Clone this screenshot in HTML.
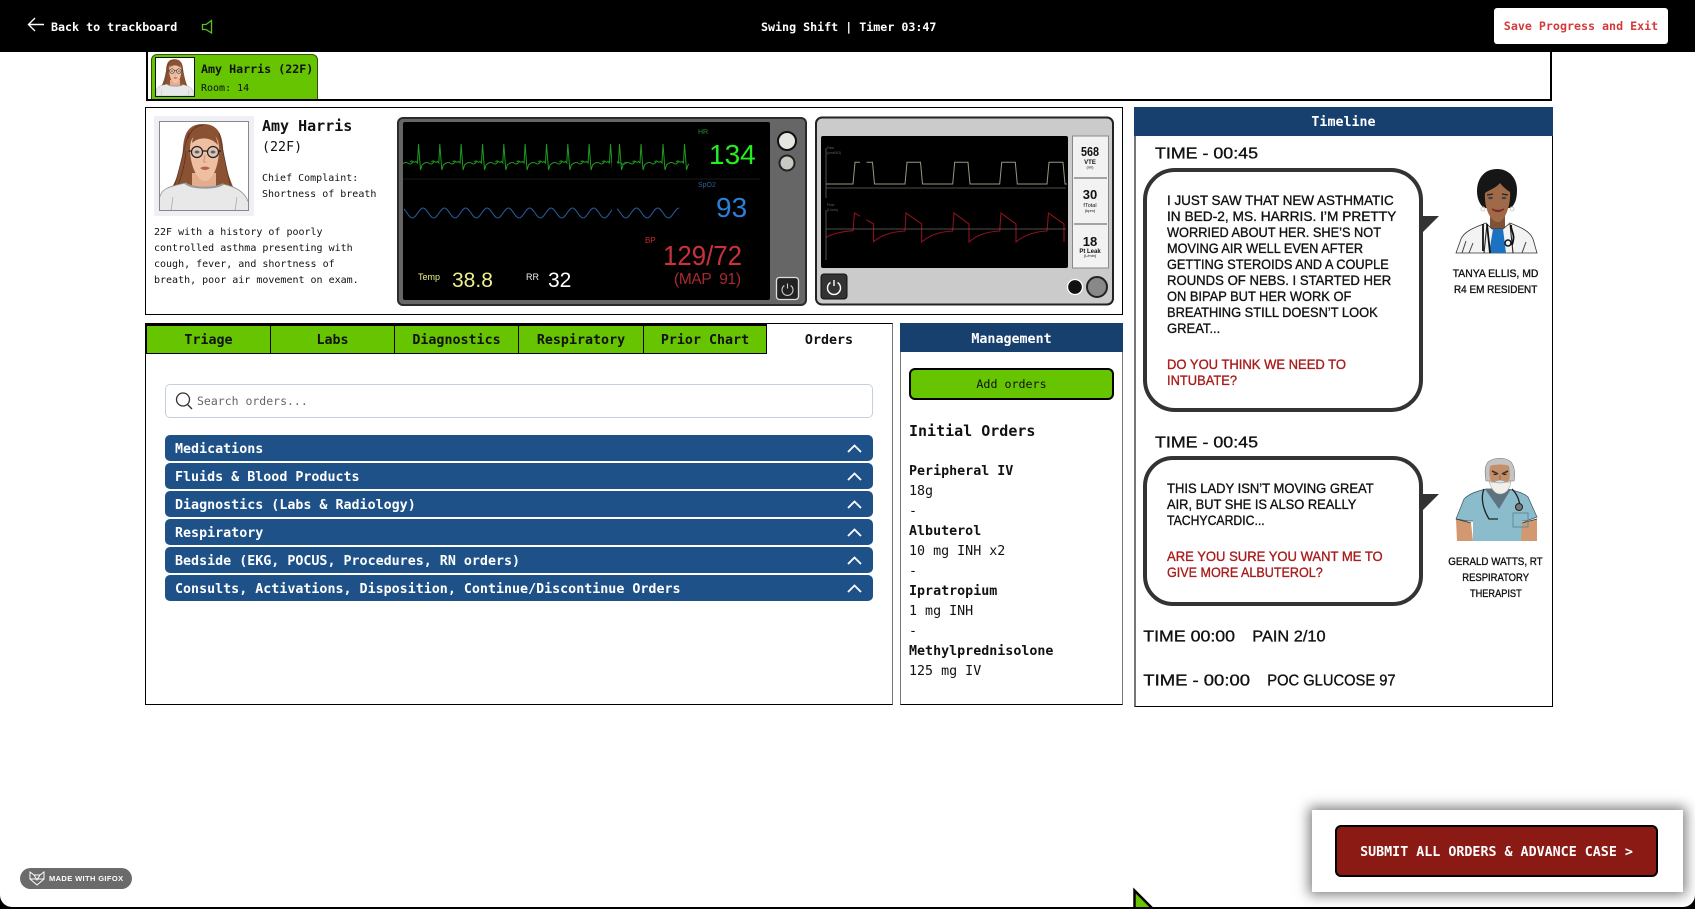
<!DOCTYPE html>
<html lang="en"><head><meta charset="utf-8"><title>Swing Shift</title>
<style>
html,body{margin:0;padding:0;width:1695px;height:909px;overflow:hidden;background:#000}
*{box-sizing:border-box}
#page{position:absolute;left:0;top:0;width:1695px;height:907px;background:#fff;border-radius:0 0 12px 12px;overflow:hidden;font-family:"DejaVu Sans Mono","Liberation Mono",monospace;color:#111}
.a{position:absolute;white-space:pre}
.b{font-weight:bold}
.tab{position:absolute;top:324px;height:30px;background:#66c400;border:1px solid #000;border-top-width:2px;text-align:center;font-weight:bold;font-size:13.33px;line-height:29px;color:#111}
.row{position:absolute;left:165px;width:708px;height:26px;background:#1f5189;border-radius:5px;color:#fff;font-weight:bold;font-size:13.33px;line-height:29px;padding-left:10px;white-space:pre}
.row svg{position:absolute;left:682px;top:9px}
.o{position:absolute;left:909px;font-size:13.33px;line-height:20px;white-space:pre}
svg{display:block}
.c{font-family:"Liberation Sans",sans-serif;fill:#111;stroke:#111;stroke-width:.35;font-size:14px}
.r{fill:#a81c1c;stroke:#a81c1c}
.n{font-size:11px}
.h{font-size:16px}
.m{font-family:"Liberation Sans",sans-serif}
</style></head><body>
<div id="page">

<div class="a" style="left:146px;top:50px;width:1406px;height:51px;border:2px solid #000;border-top:0;border-bottom-width:2px"></div>
<div class="a" style="left:151px;top:54px;width:167px;height:45px;background:#66c400;border:1px solid #2c5400;border-bottom:0;border-radius:6px 6px 0 0"></div>
<div class="a" style="left:155px;top:57px;width:40px;height:40px;background:#fff;border:1px solid #111;overflow:hidden"><svg width="38" height="38" viewBox="0 0 90 90"><use href="#amy"/></svg></div>
<div class="a b" style="left:201px;top:59px;font-size:11.67px;line-height:20px">Amy Harris (22F)</div>
<div class="a" style="left:201px;top:79px;font-size:10px;line-height:20px">Room: 14</div>

<div class="a" style="left:0;top:0;width:1695px;height:52px;background:#000"></div>
<svg class="a" style="left:26px;top:15px" width="20" height="20" viewBox="0 0 20 20" fill="none" stroke="#fff" stroke-width="1.4"><path d="M2.5 9.5H18M9 3 2.5 9.5 9 16"/></svg>
<div class="a b" style="left:51px;top:17px;font-size:11.67px;line-height:20px;color:#fff">Back to trackboard</div>
<svg class="a" style="left:200px;top:19px" width="14" height="16" viewBox="0 0 14 16" fill="none" stroke="#5fc020" stroke-width="1.3"><path d="M2.5 5.5H6L11.5 1.5V14L6 10.5H2.5Z"/></svg>
<div class="a b" style="left:761px;top:17px;font-size:11.67px;line-height:20px;color:#fff">Swing Shift | Timer 03:47</div>
<div class="a b" style="left:1494px;top:8px;width:174px;height:36px;background:#fff;border-radius:3px;text-align:center;line-height:37px;font-size:11.67px;color:#d33b3b">Save Progress and Exit</div>

<div class="a" style="left:145px;top:107px;width:978px;height:208px;border:1px solid #000"></div>
<div class="a" style="left:154px;top:116px;width:100px;height:100px;background:#eef0f5"></div>
<div class="a" style="left:159px;top:121px;width:90px;height:90px;background:#fff;border:1px solid #888;overflow:hidden"><svg style="margin:-1px" width="90" height="90" viewBox="0 0 90 90"><use href="#amy"/></svg></div>
<div class="a b" style="left:262px;top:115px;font-size:15px;line-height:22px">Amy Harris</div>
<div class="a" style="left:262px;top:137px;font-size:13.33px;line-height:22px">(22F)</div>
<div class="a" style="left:262px;top:171px;font-size:10px;line-height:16px">Chief Complaint:
Shortness of breath</div>
<div class="a" style="left:154px;top:225px;font-size:10px;line-height:16px">22F with a history of poorly
controlled asthma presenting with
cough, fever, and shortness of
breath, poor air movement on exam.</div>

<div class="a" style="left:145px;top:323px;width:748px;height:382px;border:1px solid #000;border-right:1px solid #777"></div>
<div class="tab" style="left:146px;width:125px">Triage</div>
<div class="tab" style="left:270px;width:125px">Labs</div>
<div class="tab" style="left:394px;width:125px">Diagnostics</div>
<div class="tab" style="left:518px;width:126px">Respiratory</div>
<div class="tab" style="left:643px;width:124px">Prior Chart</div>
<div class="a b" style="left:767px;top:325px;width:124px;text-align:center;font-size:13.33px;line-height:32px">Orders</div>

<div class="a" style="left:165px;top:384px;width:708px;height:34px;border:1px solid #c5d0de;border-radius:5px;background:#fff"></div>
<svg class="a" style="left:174px;top:391px" width="20" height="20" viewBox="0 0 20 20" fill="none" stroke="#333" stroke-width="1.3"><circle cx="9" cy="8.5" r="6.5"/><path d="M13.5 13.5 18 18"/></svg>
<div class="a" style="left:197px;top:391px;font-size:11.5px;line-height:20px;color:#666">Search orders...</div>

<div class="row" style="top:435px">Medications<svg width="15" height="9" fill="none" stroke="#fff" stroke-width="1.8"><path d="M1 8 7.5 1.5 14 8"/></svg></div>
<div class="row" style="top:463px">Fluids &amp; Blood Products<svg width="15" height="9" fill="none" stroke="#fff" stroke-width="1.8"><path d="M1 8 7.5 1.5 14 8"/></svg></div>
<div class="row" style="top:491px">Diagnostics (Labs &amp; Radiology)<svg width="15" height="9" fill="none" stroke="#fff" stroke-width="1.8"><path d="M1 8 7.5 1.5 14 8"/></svg></div>
<div class="row" style="top:519px">Respiratory<svg width="15" height="9" fill="none" stroke="#fff" stroke-width="1.8"><path d="M1 8 7.5 1.5 14 8"/></svg></div>
<div class="row" style="top:547px">Bedside (EKG, POCUS, Procedures, RN orders)<svg width="15" height="9" fill="none" stroke="#fff" stroke-width="1.8"><path d="M1 8 7.5 1.5 14 8"/></svg></div>
<div class="row" style="top:575px">Consults, Activations, Disposition, Continue/Discontinue Orders<svg width="15" height="9" fill="none" stroke="#fff" stroke-width="1.8"><path d="M1 8 7.5 1.5 14 8"/></svg></div>

<div class="a" style="left:900px;top:323px;width:223px;height:382px;border:1px solid #777;border-bottom:1px solid #000"></div>
<div class="a b" style="left:900px;top:323px;width:223px;height:29px;background:#17406f;color:#fff;text-align:center;font-size:13.33px;line-height:33px">Management</div>
<div class="a" style="left:909px;top:368px;width:205px;height:32px;background:#66c400;border:2px solid #000;border-radius:6px;text-align:center;line-height:28px;font-size:11.67px">Add orders</div>
<div class="a b" style="left:909px;top:420px;font-size:15px;line-height:22px">Initial Orders</div>
<div class="o" style="top:462px"><b>Peripheral IV</b>
18g
-
<b>Albuterol</b>
10 mg INH x2
-
<b>Ipratropium</b>
1 mg INH
-
<b>Methylprednisolone</b>
125 mg IV</div>

<div class="a" style="left:1134px;top:107px;width:419px;height:600px;border:1px solid #000;border-left:2px solid #777"></div>
<div class="a b" style="left:1134px;top:107px;width:419px;height:29px;background:#17406f;color:#fff;text-align:center;font-size:13.33px;line-height:32px">Timeline</div>

<svg class="a" style="left:0;top:0" width="1695" height="907" viewBox="0 0 1695 907">
<defs>
<symbol id="amy" viewBox="0 0 90 90" overflow="visible">
<path d="M44 3C29 3 25 13 24 27C23 44 19 56 12 68L24 72H68L75 68C69 54 65 42 64 27C63 12 58 3 44 3Z" fill="#8a5232"/>
<path d="M30 12C24 28 22 46 15 66M60 12C64 28 67 48 72 66M44 4C36 5 31 10 29 18M27 30C26 44 23 54 19 64" fill="none" stroke="#5d3420" stroke-width=".9"/>
<path d="M33 52H57V70H33Z" fill="#e3ad8e"/>
<path d="M31 28C31 15 37 12 46 12C56 12 60 17 60 28C60 44 54 60 46 60C38 60 31 44 31 28Z" fill="#efbfa2"/>
<path d="M33 22C38 17 50 14 59 24C57 12 52 8 46 8C38 8 34 13 33 22Z" fill="#8a5232"/>
<circle cx="38" cy="31" r="5.500" fill="#e3c4b2" stroke="#222" stroke-width="1.200"/><circle cx="54" cy="31" r="5.500" fill="#e3c4b2" stroke="#222" stroke-width="1.200"/>
<path d="M43.500 30H48.500M32.500 30H29.500M59.500 30H62" stroke="#222" stroke-width="1.200"/>
<ellipse cx="38" cy="31" rx="2.500" ry="1.500" fill="#58636b"/><ellipse cx="54" cy="31" rx="2.500" ry="1.500" fill="#58636b"/>
<path d="M46 34 44.500 41H47.500" fill="none" stroke="#c68a70" stroke-width=".8"/>
<path d="M41 47Q46 44 51 47Q46 51 41 47Z" fill="#b6604e"/>
<path d="M0 90V80C1 68 8 66 26 62C33 68 56 68 64 63C78 66 88 72 90 84V90Z" fill="#e8e8e8" stroke="#888" stroke-width=".7"/>
<path d="M26 62C33 68 56 68 64 63" fill="none" stroke="#999" stroke-width="2"/>
<path d="M12 90 14 76M76 90 78 76" stroke="#aaa" stroke-width=".8"/>
</symbol>
<symbol id="bt" overflow="visible" viewBox="0 0 24 30" width="24" height="30">
<path d="M0 19C1 18 2 17.500 3 18.500S5 19.500 6 18.500L7.500 20 8.500 1 10.500 27 12 22C13 21 15 19.500 17 19.500S19 21 21 21 22 20 24 19" fill="none" stroke="#1f9a1f" stroke-width="1"/>
</symbol>
<clipPath id="c1"><path d="M403 130H612V175H403ZM617 130H689V175H617Z"/></clipPath>
<clipPath id="c2"><path d="M404 200H612V225H404ZM617 200H688V225H617Z"/></clipPath>
</defs>

<!-- monitor 1 -->
<rect x="398" y="118" width="408" height="187" rx="5" fill="#666" stroke="#2b2b2b" stroke-width="2"/>
<rect x="403" y="122" width="367" height="178" rx="2" fill="#000"/>
<path d="M403 179H760" stroke="#181818"/>
<g clip-path="url(#c1)">
<use href="#bt" x="410" y="143"/><use href="#bt" x="431.300" y="143"/><use href="#bt" x="452.600" y="143"/><use href="#bt" x="474" y="143"/><use href="#bt" x="495.300" y="143"/><use href="#bt" x="516.600" y="143"/><use href="#bt" x="538" y="143"/><use href="#bt" x="559.300" y="143"/><use href="#bt" x="580.600" y="143"/><use href="#bt" x="602" y="143"/><use href="#bt" x="611" y="143"/><use href="#bt" x="632.500" y="143"/><use href="#bt" x="654.500" y="143"/><use href="#bt" x="676" y="143"/><use href="#bt" x="389" y="143"/>
</g>
<path clip-path="url(#c2)" d="M401.700 208c4 0 6.670 10 10.670 10 s6.670 -10 10.670 -10 s6.670 10 10.670 10 s6.670 -10 10.670 -10 s6.670 10 10.670 10 s6.670 -10 10.670 -10 s6.670 10 10.670 10 s6.670 -10 10.670 -10 s6.670 10 10.670 10 s6.670 -10 10.670 -10 s6.670 10 10.670 10 s6.670 -10 10.670 -10 s6.670 10 10.670 10 s6.670 -10 10.670 -10 s6.670 10 10.670 10 s6.670 -10 10.670 -10 s6.670 10 10.670 10 s6.670 -10 10.670 -10 s6.670 10 10.670 10 s6.670 -10 10.670 -10 s6.670 10 10.670 10 s6.670 -10 10.670 -10 s6.670 10 10.670 10 s6.670 -10 10.670 -10 s6.670 10 10.670 10 s6.670 -10 10.670 -10" fill="none" stroke="#2a5e9c" stroke-width="1"/>
<text class="m" x="698" y="134" font-size="7" fill="#2a8a2a">HR</text>
<text class="m" x="709" y="164" font-size="28" fill="#22ee22">134</text>
<text class="m" x="698" y="187" font-size="7" fill="#2a5e9c">SpO2</text>
<text class="m" x="716" y="217" font-size="28" fill="#2a7fd8">93</text>
<text class="m" x="645" y="243" font-size="8" fill="#c0282c">BP</text>
<text class="m" x="663" y="265" font-size="28" textLength="79" lengthAdjust="spacingAndGlyphs" fill="#c8333a">129/72</text>
<text class="m" x="674" y="284" font-size="15.500" textLength="67" fill="#a82a2e">(MAP&#160;&#160;91)</text>
<text class="m" x="418" y="280" font-size="9" fill="#eef08a">Temp</text>
<text class="m" x="452" y="287" font-size="21" fill="#eef08a">38.8</text>
<text class="m" x="526" y="280" font-size="9" fill="#eee">RR</text>
<text class="m" x="548" y="287" font-size="21" fill="#fff">32</text>
<circle cx="787" cy="141" r="9" fill="#e6e6e0" stroke="#111" stroke-width="2"/>
<circle cx="787" cy="163" r="7.500" fill="#c9c9c4" stroke="#222" stroke-width="2"/>
<rect x="776.500" y="277.500" width="22" height="22" rx="3" fill="#222" stroke="#ddd" stroke-width="1.300"/>
<path d="M784.300 285.500a5.500 5.500 0 1 0 6.400 0M787.500 283.500v5" fill="none" stroke="#ccc" stroke-width="1.100"/>

<!-- monitor 2 -->
<rect x="816" y="117.500" width="297" height="187" rx="6" fill="#cbcbcb" stroke="#222" stroke-width="2"/>
<rect x="821" y="136" width="247" height="132" rx="2" fill="#000"/>
<path d="M826 184H853L855 162.300H872.500L874.500 184H905L907 162.300H920.500L922.500 184H952.700L954.700 162.300H968L970 184H999.700L1001.700 162.300H1015.300L1017.300 184H1047L1049 162.300H1063L1065 184H1067" fill="none" stroke="#9a9582" stroke-width="1"/>
<path d="M826 237.300Q836 232 853 230.700L854.500 213 873.600 224V241.700Q885 232 905 231L906 213 921.700 224V242Q933 232 952.700 231L954 213 969 224V242Q980 232 999.700 231L1001 213 1016 224V242Q1028 232 1047 231L1048.500 213 1064 224V242" fill="none" stroke="#8f0f1c" stroke-width="1.100"/>
<rect x="860" y="158" width="6.500" height="70" fill="#000"/>
<path d="M826 188H1066M826 229H1066M826 148V198M826 210V260" stroke="#666" stroke-width=".8" fill="none"/>
<text class="m" x="827" y="149" font-size="3.500" fill="#666">Paw</text><text class="m" x="827" y="154" font-size="3.500" fill="#666">(cmH2O)</text>
<text class="m" x="827" y="206" font-size="3.500" fill="#666">Flow</text><text class="m" x="827" y="211" font-size="3.500" fill="#666">(L/min)</text>
<rect x="1072.500" y="136" width="36" height="132" fill="#f2f2f2" stroke="#888"/>
<path d="M1074 178H1107M1074 224H1107" stroke="#555"/>
<g class="m" text-anchor="middle" fill="#111">
<text x="1090" y="156" font-size="13" font-weight="bold" textLength="18" lengthAdjust="spacingAndGlyphs">568</text>
<text x="1090" y="164" font-size="6" font-weight="bold">VTE</text><text x="1090" y="168.500" font-size="4">(ml)</text>
<text x="1090" y="199" font-size="13" font-weight="bold">30</text>
<text x="1090" y="207" font-size="5.500">fTotal</text><text x="1090" y="212" font-size="4">(bpm)</text>
<text x="1090" y="246" font-size="13" font-weight="bold">18</text>
<text x="1090" y="253" font-size="6" font-weight="bold">Pt Leak</text><text x="1090" y="257" font-size="4">(L/min)</text>
</g>
<rect x="821" y="274" width="26" height="25" rx="3" fill="#333" stroke="#111"/>
<path d="M830.500 282.500a6.500 6.500 0 1 0 7 0M834 280v6" fill="none" stroke="#fff" stroke-width="1.400"/>
<circle cx="1075" cy="287" r="7.500" fill="#111" stroke="#fff" stroke-width="1.300"/>
<circle cx="1097" cy="287" r="10" fill="#888" stroke="#222" stroke-width="2"/>

<!-- bubbles -->
<rect x="1145" y="170" width="276" height="240" rx="30" fill="#fff" stroke="#333" stroke-width="4"/>
<path d="M1423 216H1439L1423 232Z" fill="#333"/>
<rect x="1145" y="458" width="276" height="146" rx="28" fill="#fff" stroke="#333" stroke-width="4"/>
<path d="M1423 494H1439L1423 510Z" fill="#333"/>

<text class="c h" x="1155" y="158.500" textLength="103" lengthAdjust="spacingAndGlyphs">TIME - 00:45</text>
<text class="c" x="1167" y="205" textLength="226.700" lengthAdjust="spacingAndGlyphs">I JUST SAW THAT NEW ASTHMATIC</text>
<text class="c" x="1167" y="221" textLength="229.300" lengthAdjust="spacingAndGlyphs">IN BED-2, MS. HARRIS. I’M PRETTY</text>
<text class="c" x="1167" y="237" textLength="214" lengthAdjust="spacingAndGlyphs">WORRIED ABOUT HER. SHE’S NOT</text>
<text class="c" x="1167" y="253" textLength="196" lengthAdjust="spacingAndGlyphs">MOVING AIR WELL EVEN AFTER</text>
<text class="c" x="1167" y="269" textLength="221.700" lengthAdjust="spacingAndGlyphs">GETTING STEROIDS AND A COUPLE</text>
<text class="c" x="1167" y="285" textLength="224.300" lengthAdjust="spacingAndGlyphs">ROUNDS OF NEBS. I STARTED HER</text>
<text class="c" x="1167" y="301" textLength="184.300" lengthAdjust="spacingAndGlyphs">ON BIPAP BUT HER WORK OF</text>
<text class="c" x="1167" y="317" textLength="210.700" lengthAdjust="spacingAndGlyphs">BREATHING STILL DOESN’T LOOK</text>
<text class="c" x="1167" y="333" textLength="53.300" lengthAdjust="spacingAndGlyphs">GREAT...</text>
<text class="c r" x="1167" y="369" textLength="179" lengthAdjust="spacingAndGlyphs">DO YOU THINK WE NEED TO</text>
<text class="c r" x="1167" y="385" textLength="70" lengthAdjust="spacingAndGlyphs">INTUBATE?</text>

<text class="c n" x="1452.700" y="277" textLength="85.700" lengthAdjust="spacingAndGlyphs">TANYA ELLIS, MD</text>
<text class="c n" x="1454" y="293" textLength="83.300" lengthAdjust="spacingAndGlyphs">R4 EM RESIDENT</text>

<text class="c h" x="1155" y="447.500" textLength="103" lengthAdjust="spacingAndGlyphs">TIME - 00:45</text>
<text class="c" x="1167" y="493" textLength="206.700" lengthAdjust="spacingAndGlyphs">THIS LADY ISN’T MOVING GREAT</text>
<text class="c" x="1167" y="509" textLength="189.300" lengthAdjust="spacingAndGlyphs">AIR, BUT SHE IS ALSO REALLY</text>
<text class="c" x="1167" y="525" textLength="97.700" lengthAdjust="spacingAndGlyphs">TACHYCARDIC...</text>
<text class="c r" x="1167" y="561" textLength="215.700" lengthAdjust="spacingAndGlyphs">ARE YOU SURE YOU WANT ME TO</text>
<text class="c r" x="1167" y="577" textLength="155.700" lengthAdjust="spacingAndGlyphs">GIVE MORE ALBUTEROL?</text>

<text class="c n" x="1448.300" y="565" textLength="94.300" lengthAdjust="spacingAndGlyphs">GERALD WATTS, RT</text>
<text class="c n" x="1462.300" y="581" textLength="66.700" lengthAdjust="spacingAndGlyphs">RESPIRATORY</text>
<text class="c n" x="1470" y="597" textLength="51.700" lengthAdjust="spacingAndGlyphs">THERAPIST</text>

<text class="c h" x="1143.300" y="641.500" textLength="91.700" lengthAdjust="spacingAndGlyphs">TIME 00:00</text>
<text class="c h" x="1252.300" y="641.500" textLength="73.300" lengthAdjust="spacingAndGlyphs">PAIN 2/10</text>
<text class="c h" x="1143.300" y="685.500" textLength="106.700" lengthAdjust="spacingAndGlyphs">TIME - 00:00</text>
<text class="c h" x="1267.300" y="685.500" textLength="128.300" lengthAdjust="spacingAndGlyphs">POC GLUCOSE 97</text>

<!-- Tanya -->
<g transform="translate(1456 169)">
<path d="M41 0C28 0 21 10 21 22C21 30 24 36 28 39H55C59 35 61 30 61 21C61 9 53 0 41 0Z" fill="#161616"/>
<path d="M34 42H49V60H34Z" fill="#7f5236"/>
<path d="M29 24C33 21 40 19 44 14C47 18 51 21 54 23C55 36 49 53 42 53C34 53 28 38 29 24Z" fill="#a06a48"/>
<path d="M31 26 37 25M46 25 52 26" stroke="#222" stroke-width="1.200"/>
<ellipse cx="34.500" cy="29" rx="2.300" ry="1.200" fill="#345"/><ellipse cx="48" cy="29" rx="2.300" ry="1.200" fill="#345"/>
<path d="M36 40Q42 45 48 40Q42 43 36 40Z" fill="#fff" stroke="#7a2a28" stroke-width="1.200"/>
<circle cx="27" cy="40" r="2" fill="none" stroke="#ccc"/><circle cx="56" cy="40" r="2" fill="none" stroke="#ccc"/>
<path d="M0 84 5 70C8 62 20 58 30 54L36 60H47L54 54C64 58 74 62 77 70L81 84Z" fill="#f3f3f3" stroke="#333" stroke-width=".8"/>
<path d="M33 84 37 60H47L50 84Z" fill="#1a72c0"/>
<path d="M31 55 28 84M54 55 57 84" fill="none" stroke="#222" stroke-width="1.100"/>
<path d="M27 55V82M31 55 34 84M55 56C55 64 60 64 56 76" fill="none" stroke="#111" stroke-width="1.800"/>
<circle cx="52" cy="74" r="3" fill="none" stroke="#111" stroke-width="1.500"/>
<path d="M6 84 10 72M13 84 17 74M66 84 70 73" stroke="#444" stroke-width="1"/>
</g>

<!-- Gerald -->
<g transform="translate(1456 457)">
<path d="M0 62 8 42C14 36 22 34 30 32H52C60 34 68 36 72 40L81 60 70 64H12Z" fill="#8bbccb" stroke="#3b5560" stroke-width=".7"/>
<path d="M17 60H66V84H17Z" fill="#8bbccb"/>
<path d="M0 62 15 66 17 84H1Z" fill="#d2986f"/><path d="M81 62 66 66 65 84H81Z" fill="#d2986f"/>
<path d="M0 62 15 66M81 62 66 66" stroke="#333" stroke-width=".8"/>
<path d="M29 32 43 52 55 32Z" fill="#5d7480"/>
<path d="M32 5C38 0 50 0 55 5C59 10 59 18 58 24L30 24C29 16 28 10 32 5Z" fill="#c4c4c4" stroke="#777" stroke-width=".6"/>
<path d="M34 9C39 7 49 7 53 9C55 20 54 28 44 30C34 28 32 20 34 9Z" fill="#c68f6b"/>
<path d="M33 24C35 32 39 37 44 37C50 37 54 32 55 24C52 27 50 24 44 24C38 24 36 27 33 24Z" fill="#f0efea" stroke="#999" stroke-width=".5"/>
<path d="M38 25Q44 21 50 25Q44 27 38 25Z" fill="#ddd" stroke="#888" stroke-width=".5"/>
<path d="M36 14 42 17M46 17 52 14" stroke="#333" stroke-width="1.800"/>
<path d="M37.500 17.500h3M47.500 17.500h3" stroke="#222" stroke-width="1"/>
<path d="M44 18V23" stroke="#8a5e42" stroke-width=".8"/>
<path d="M28 32C24 42 28 54 33 62H42M56 32C62 38 63 44 64 48" fill="none" stroke="#222" stroke-width="1.300"/>
<circle cx="63" cy="50" r="3.500" fill="#777" stroke="#222"/>
<path d="M57 56H72V70H57Z" fill="none" stroke="#5f8a99"/>
</g>
</svg>

<!-- badge -->
<div class="a" style="left:20px;top:868px;width:112px;height:21px;background:#6b6b6b;border-radius:10.500px"></div>
<svg class="a" style="left:29px;top:871px" width="16" height="15" viewBox="0 0 16 15" fill="none" stroke="#fff" stroke-width="1"><path d="M1 1 5 4H11L15 1V8L8 14 1 8ZM5 4 8 9 11 4M1 8H8H15"/></svg>
<div class="a" style="left:49px;top:871px;font:bold 7.500px/15px 'Liberation Sans',sans-serif;letter-spacing:.38px;color:#fff">MADE WITH GIFOX</div>

<!-- submit -->
<div class="a" style="left:1312px;top:810px;width:371px;height:82px;background:#fff;box-shadow:0 0 12px 3px rgba(0,0,0,.5)"></div>
<div class="a" style="left:1335px;top:825px;width:323px;height:52px;background:#8b1a14;border:2px solid #000;border-radius:6px;text-align:center;line-height:51px;color:#fff;font-weight:bold;font-size:13.33px">SUBMIT ALL ORDERS &amp; ADVANCE CASE &gt;</div>

<!-- cursor -->
<svg class="a" style="left:1130px;top:886px" width="30" height="21" viewBox="0 0 30 21"><path d="M4.500 4.500V26H26Z" fill="#66c400" stroke="#000" stroke-width="2.500"/></svg>
</div>
</body></html>
